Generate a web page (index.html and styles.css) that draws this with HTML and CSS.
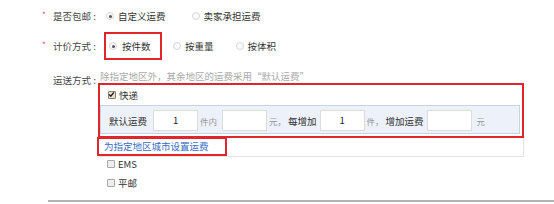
FILE: index.html
```html
<!DOCTYPE html>
<html lang="zh-CN">
	<head>
		<title>运费设置</title>
		<meta charset="UTF-8">
		<link rel="stylesheet" href="styles.css">
	</head>
	<body>
		<div class="form">
			<div class="row rowPost">
				<div class="lbl"><span class="star">*</span>是否包邮 :</div>
				<div class="opt"><span class="radio on"></span>自定义运费</div>
				<div class="opt optWide"><span class="radio"></span>卖家承担运费</div>
			</div>

			<div class="row rowPrice">
				<div class="lbl"><span class="star">*</span>计价方式 :</div>
				<div class="opt mark"><span class="radio on"></span>按件数</div>
				<div class="opt optGap"><span class="radio"></span>按重量</div>
				<div class="opt optGap2"><span class="radio"></span>按体积</div>
			</div>

			<div class="row rowShip">
				<div class="lbl lblTop"><span class="star"></span>运送方式 :</div>
				<div class="ship">
					<p class="hint">除指定地区外，其余地区的运费采用“默认运费”</p>
					<div class="shipBox">
						<div class="express">
							<div class="checkLine"><span class="check on"><svg width="7" height="7" viewBox="0 0 7 7"><path d="M1.2 3.6 L2.8 5.2 L5.9 1.4" fill="none" stroke="#222" stroke-width="1.4"/></svg></span>快递</div>
							<div class="feeBar">
								<span class="feeLbl">默认运费</span>
								<span class="field">1</span>
								<span class="unit">件内</span>
								<span class="field f2"></span>
								<span class="unit">元，</span>
								<span class="feeLbl l2">每增加</span>
								<span class="field f3">1</span>
								<span class="unit">件，</span>
								<span class="feeLbl l2">增加运费</span>
								<span class="field f4"></span>
								<span class="unit u2">元</span>
							</div>
						</div>
						<a class="areaLink" href="#">为指定地区城市设置运费</a>
					</div>
					<div class="others">
						<div class="checkLine other"><span class="check"></span>EMS</div>
						<div class="checkLine other"><span class="check"></span>平邮</div>
					</div>
				</div>
			</div>
		</div>
		<div class="rule"></div>
	</body>
</html>
```

FILE: styles.css
```css
body {
	margin : 0;
	font-family : "Noto Sans CJK SC", "Noto Sans", sans-serif;
	font-size : 9.5px;
	color : #333;
	background-color : white;
}
p {
	margin : 0;
	padding : 0;
}

.row {
	display : flex;
	align-items : center;
}
.rowPost {
	height : 32px;
}
.rowPrice {
	height : 28px;
}
.rowShip {
	align-items : flex-start;
	margin-top : 10px;
}
.lbl {
	display : flex;
	width : 56px;
	padding-left : 42px;
	color : #444;
}
.lblTop {
	padding-top : 3px;
}
.star {
	width : 11px;
	color : #f04040;
	font-size : 8px;
}

.opt {
	display : flex;
	align-items : center;
	height : 100%;
}
.optWide {
	margin-left : 18px;
}
.optGap {
	margin-left : 3px;
}
.optGap2 {
	margin-left : 14px;
}
.mark {
	box-sizing : border-box;
	width : 58px;
	margin-left : 6px;
	padding-left : 3px;
	border : 2px solid #e0262c;
}
.radio {
	box-sizing : border-box;
	width : 8px;
	height : 8px;
	margin-left : 8px;
	margin-right : 4px;
	border : 1px solid #d6d6d6;
	border-radius : 50%;
	background-color : #fafafa;
	position : relative;
}
.mark .radio {
	margin-left : 0;
	margin-right : 5px;
}
.radio.on::after {
	content : "";
	position : absolute;
	left : 1.5px;
	top : 1.5px;
	width : 3px;
	height : 3px;
	border-radius : 50%;
	background-color : #555;
}

.ship {
	width : 426px;
}
.hint {
	height : 13px;
	line-height : 13px;
	padding-left : 2px;
	color : #aaa;
}
.shipBox {
	box-sizing : border-box;
	height : 74px;
	border : 1px solid #e4e4e4;
	border-top : none;
}
.express {
	box-sizing : border-box;
	height : 55px;
	margin : 0 -1px 0 -1px;
	border : 2px solid #e0262c;
}
.checkLine {
	display : flex;
	align-items : center;
	height : 20px;
	padding-left : 8px;
}
.check {
	box-sizing : border-box;
	display : flex;
	width : 8px;
	height : 8px;
	margin-right : 3px;
	border : 1px solid #a8a8a8;
	border-radius : 1px;
	background-color : #eee;
}
.check.on {
	background-color : #e8e0d0;
	border-color : #8a8070;
}
.check svg {
	margin : -1px;
}
.feeBar {
	box-sizing : border-box;
	display : flex;
	align-items : center;
	height : 29px;
	margin-right : 2px;
	padding-left : 8px;
	padding-top : 2px;
	border : 1px solid #c9d2e2;
	background-color : #edf1f9;
}
.feeLbl {
	margin-right : 6px;
}
.feeLbl.l2 {
	margin-left : 2px;
	margin-right : 3px;
}
.field {
	box-sizing : border-box;
	width : 45px;
	height : 21px;
	line-height : 19px;
	text-align : center;
	border : 1px solid #dcdcdc;
	background-color : white;
	color : #222;
}
.field.f2 {
	margin-left : 5px;
}
.unit {
	margin-left : 2px;
	color : #999;
	font-size : 8.5px;
}
.unit.u2 {
	margin-left : 5px;
}
.areaLink {
	box-sizing : border-box;
	display : block;
	width : 130px;
	height : 19px;
	line-height : 15px;
	margin : -1px 0 0 -2px;
	padding-left : 5px;
	border : 2px solid #e0262c;
	color : #3a6cc8;
	text-decoration : none;
}
.others {
	margin-top : -3px;
}
.other {
	height : 19px;
	padding-left : 9px;
}

.rule {
	margin : 8px 0 0 48px;
	border-top : 2px solid #b3b3b3;
}
```
